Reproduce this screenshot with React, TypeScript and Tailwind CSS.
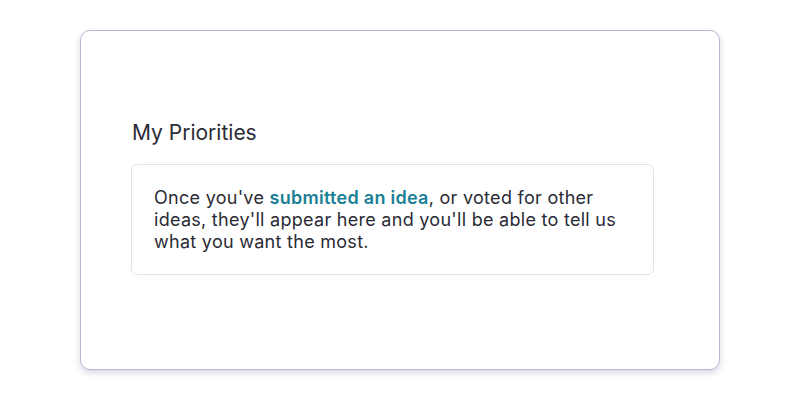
export default function App() {
  return (
    <div className="w-[800px] h-[400px] bg-white pl-[80px] pt-[30px]" style={{ fontFamily: "Inter, 'Noto Sans', sans-serif" }}>
      <div className="w-[640px] h-[340px] rounded-[10px] border border-[#bab8d0] bg-white shadow-[0_3px_6px_rgba(120,118,160,0.3)] pl-[50px] pt-[88px]">
        <h2 className="pl-[1px] text-[21px] leading-[28px] text-[#2b2b36] font-normal">My Priorities</h2>
        <div className="mt-[17px] w-[523px] rounded-[6px] border border-[#e3e3ea] pl-[22px] pr-[20px] pt-[22px] pb-[21px]">
          <p className="text-[18px] leading-[22px] tracking-[0.28px] text-[#2b2b36]">
            Once you've{" "}
            <a className="font-semibold text-[#1a8095]">submitted an idea</a>, or voted for other ideas, they'll appear here and you'll be able to tell us what you want the most.
          </p>
        </div>
      </div>
    </div>
  );
}
